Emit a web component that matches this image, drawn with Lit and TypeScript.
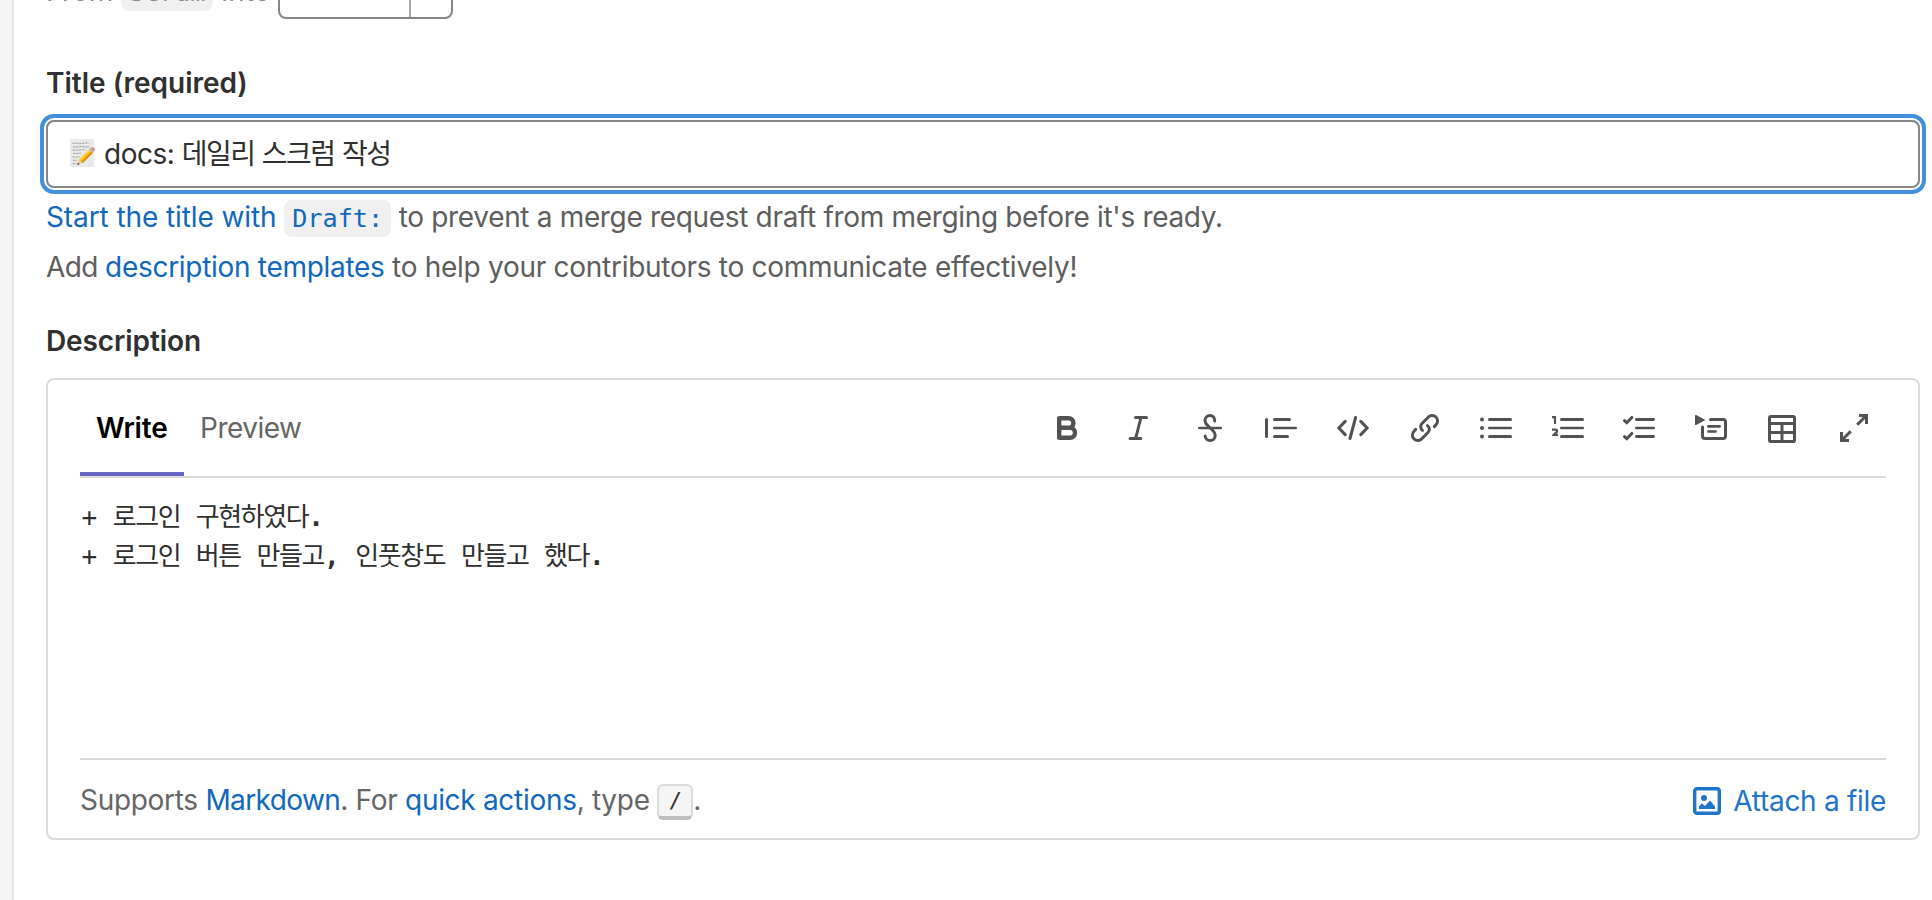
import { LitElement, html, svg, css } from "lit";
import { customElement } from "lit/decorators.js";

const icons = [
  // bold
  svg`<path stroke-width="4.4" stroke-linejoin="round" d="M9.2 6.2H18.6a4.6 4.6 0 0 1 0 9.6H9.2zM9.2 15.8H20a5 5 0 0 1 0 10H9.2z"/>`,
  // italic
  svg`<path d="M13.5 5.5H24.5M8 26.5H18.8M19 5.5L13.6 26.5"/>`,
  // strikethrough
  svg`<path d="M20.7 9C20.7 5.6 18.8 3.5 16 3.5C13 3.5 11 5.6 11 8.6C11 15 21.2 16.8 21.2 23.4C21.2 26.5 19 28.5 16.1 28.5C13.2 28.5 11.2 26.6 11.2 24"/><path stroke-width="2.6" d="M5.3 16H26.7"/>`,
  // quote
  svg`<path d="M1.5 7.5V24.5M9.5 7.5H24.5M9.5 24.5H22.5"/><path stroke-width="2.6" d="M9.3 16H30.7"/>`,
  // code
  svg`<path d="M8.2 9.4L1.9 16L8.2 22.6M23.8 9.4L30.1 16L23.8 22.6M18.6 5.5L13 26.5"/>`,
  // link
  svg`<path d="M25.3 14.6L26.8 13C29.2 10.5 29.1 7 26.9 5C24.8 2.9 21.4 2.9 19.2 5.2L13 11.5C11 13.6 11.3 16.8 13.5 18.4M6.7 17.4L5.2 19C2.8 21.5 2.9 25 5.1 27C7.2 29.1 10.6 29.1 12.8 26.8L19 20.5C21 18.4 20.7 15.2 18.5 13.6"/>`,
  // bullet list
  svg`<g fill="#525252" stroke="none"><circle cx="2" cy="7.5" r="2"/><circle cx="2" cy="16" r="2"/><circle cx="2" cy="24.5" r="2"/></g><path d="M9.5 7.5H30.5M9.5 24.5H30.5"/><path stroke-width="2.6" d="M9.3 16H30.7"/>`,
  // numbered list
  svg`<path stroke-width="2.2" stroke-linecap="butt" d="M0 5.1H3V12M0 17.6H3.2C5.6 17.6 5.6 20 3.6 21L1.6 22.9H6"/><path d="M9.5 7.5H30.5M9.5 24.5H30.5"/><path stroke-width="2.6" d="M9.3 16H30.7"/>`,
  // task list
  svg`<path stroke-width="2.9" d="M1.5 8.6L3.8 10.8L8.8 5.4M1.5 24.6L3.8 26.8L8.8 21.4M13.5 7.5H30.5M13.5 24.5H30.5"/><path stroke-width="2.6" d="M13.3 16H30.7"/>`,
  // collapsible section
  svg`<path fill="#525252" stroke="none" d="M0 3.6C0 3 .6 2.8 1.1 3.1L9.6 7.5C10.1 7.8 10.1 8.3 9.6 8.6L1.1 13C.6 13.3 0 13 0 12.5z"/><path d="M15.5 7.5H28Q30.5 7.5 30.5 10V24Q30.5 26.5 28 26.5H10Q7.5 26.5 7.5 24V15"/><path stroke-width="2.7" d="M13.4 14.4H24.6M13.4 19.5H20.6"/>`,
  // table
  svg`<rect x="3.5" y="4.5" width="25" height="25" rx="1.6"/><path stroke-linecap="butt" d="M3 11.6H29M3 20.4H29M16 12V30"/>`,
  // full screen
  svg`<path stroke-linecap="butt" d="M21 3.5H28.5V12M28 4L19.2 12.8M11 28.5H3.5V20M4 28L12.8 19.2"/>`,
];

@customElement("app-root")
export class AppRoot extends LitElement {
  static styles = css`
    :host {
      display: block;
      font: 400 28px/40px Inter, "Noto Sans CJK KR", sans-serif;
      letter-spacing: -0.3px;
      color: #303030;
    }
    * { box-sizing: border-box; }
    .page { display: flex; height: 900px; overflow: hidden; background: #fff; }
    .side { width: 14px; background: #f5f5f5; border-right: 2px solid #e6e6e6; }
    .main { flex: 1; min-width: 0; padding: 0 12px 0 32px; }
    .branches { height: 63px; overflow: hidden; }
    .branch-row { display: flex; height: 64px; margin-top: -45px; }
    .branch-text { width: 232px; padding-top: 16px; color: #8a8a8a; white-space: nowrap; letter-spacing: 0.1px; }
    .select { width: 175px; border: 2px solid #868686; border-radius: 8px; display: flex; justify-content: flex-end; }
    .caret { width: 42px; border-left: 2px solid #a8a8a8; }
    .code {
      font: 25.2px/0 "DejaVu Sans Mono", monospace;
      letter-spacing: 0;
      padding: 4px 8px;
      border-radius: 8px;
      background: #f0f0f0;
    }
    .label { font-weight: 600; letter-spacing: 0; }
    .desc { letter-spacing: -0.1px; }
    .input {
      display: flex;
      align-items: center;
      height: 68px;
      margin-top: 17px;
      padding: 0 22px;
      border: 2px solid #868686;
      border-radius: 8px;
      box-shadow: 0 0 0 2px #fff, 0 0 0 6px #428fdc;
    }
    .memo { width: 25px; height: 28px; margin-right: 9px; margin-bottom: 3px; }
    .title { white-space: pre; padding-bottom: 3px; letter-spacing: -0.5px; }
    .title-ko { font-family: "Noto Sans CJK KR", sans-serif; letter-spacing: -1.5px; word-spacing: 2.6px; }
    .help { margin: 0; color: #5e5e5e; white-space: nowrap; }
    .first { margin-top: 9px; }
    .second { margin-top: 10px; margin-bottom: 34px; }
    .link { color: #1068bf; }
    .even { letter-spacing: -0.1px; }
    .to { letter-spacing: -0.33px; }
    .add { letter-spacing: -0.6px; }
    .tail { letter-spacing: -0.28px; }
    .editor {
      height: 462px;
      margin-top: 17px;
      padding: 0 32px;
      border: 2px solid #dbdbdb;
      border-radius: 8px;
    }
    .bar { display: flex; height: 98px; border-bottom: 2px solid #dbdbdb; }
    .tab { height: 96px; padding: 28px 15px 0 16px; color: #666; letter-spacing: -0.5px; }
    .active { width: 104px; color: #000; font-weight: 600; letter-spacing: -0.2px; border-bottom: 4px solid #6666c4; }
    .tools {
      display: grid;
      grid-template-columns: 72px 72px 71px 72px 72px 71px 72px 71px 72px 71px 72px 32px;
      margin-left: auto;
      padding: 32px 16px 0 0;
    }
    .tool { display: block; width: 32px; height: 32px; fill: none; stroke: #525252; stroke-width: 3; stroke-linecap: round; }
    .text {
      height: 280px;
      padding: 20px 0 0 1.4px;
      font: 26px/39px "DejaVu Sans Mono", "Noto Sans CJK KR", monospace;
      letter-spacing: 0;
      white-space: pre;
    }
    .ko { letter-spacing: -1.43px; }
    .mark { font-weight: 700; }
    .foot { display: flex; justify-content: space-between; padding-top: 20px; border-top: 2px solid #dbdbdb; color: #666; }
    .md { letter-spacing: -0.6px; }
    .kbd {
      display: inline-flex;
      align-items: center;
      justify-content: center;
      width: 36px;
      height: 36px;
      vertical-align: 2px;
      border: 2px solid #dbdbdb;
      border-bottom: 4px solid #bfbfbf;
      border-radius: 6px;
      background: #f5f5f5;
      color: #303030;
      font: 22px/28px "DejaVu Sans Mono", monospace;
    }
    .attach { display: flex; color: #1f75cb; padding-top: 1px; }
    .image { width: 28px; height: 28px; margin: 6px 12px 0 0; }
  `;

  private mono(text: string) {
    return text.split(/([\uac00-\ud7a3]+|[.,])/).map((part, i) => {
      if (i % 2 === 0) return part;
      return html`<span class=${part === "." || part === "," ? "mark" : "ko"}>${part}</span>`;
    });
  }

  render() {
    return html`<div class="page">
      <div class="side"></div>
      <div class="main">
        <div class="branches">
          <div class="branch-row">
            <div class="branch-text">From <span class="code">Scrum</span> into</div>
            <div class="select"><div class="caret"></div></div>
          </div>
        </div>
        <div class="label">Title (required)</div>
        <div class="input">
          <svg class="memo" viewBox="0 0 25 28">
            <rect width="24" height="28" rx="1" fill="#e9e9e9" />
            <path d="M2.5 4.5l4-.5 3 .7 5-.8 4 .4M3 8h5l3-.5 5 .5h4M2.5 11.2h6l4-.5 3 .5M3 14.5h4l4-.4M2.5 18h5l2-.5M3 21.3h4M2.5 24.6h4" fill="none" stroke="#a0a0a0" stroke-width="1" stroke-dasharray="2.4 .7" />
            <path d="M7.2 25.9L9 20.5L12 23.8z" fill="#e9c58e" />
            <path d="M7.2 26L8 23.7L9.5 25.2z" fill="#333" />
            <path d="M9 20.3L19.2 10.4L22.8 13.8L12.6 23.9z" fill="#f5b70f" />
            <path d="M9 20.3L19.2 10.4L20.3 11.5L10.2 21.5z" fill="#ffd84a" />
            <path d="M11.6 23L21.8 12.9L22.8 13.8L12.6 23.9z" fill="#c98408" />
            <path d="M19.2 10.4L20.5 9.1L24 12.6L22.8 13.8z" fill="#a9b3bb" />
            <path d="M20.5 9.1C21.6 7.8 23 7.9 24.1 9.1C25.2 10.3 25.1 11.6 24 12.6z" fill="#ee7f88" />
          </svg>
          <span class="title">docs: <span class="title-ko">데일리 스크럼 작성</span></span>
        </div>
        <p class="help first"><span class="link even">Start the title with </span><span class="link code">Draft:</span><span class="to"> to prevent a merge request draft from merging before it's ready.</span></p>
        <p class="help second"><span class="add">Add </span><span class="link">description templates</span><span class="tail"> to help your contributors to communicate effectively!</span></p>
        <div class="label desc">Description</div>
        <div class="editor">
          <div class="bar">
            <div class="tab active">Write</div>
            <div class="tab">Preview</div>
            <div class="tools">${icons.map((i) => html`<svg class="tool" viewBox="0 0 32 32">${i}</svg>`)}</div>
          </div>
          <div class="text">${this.mono("+ 로그인 구현하였다.\n+ 로그인 버튼 만들고, 인풋창도 만들고 했다.")}</div>
          <div class="foot">
            <div>Supports <span class="link md">Markdown</span>. For <span class="link">quick actions</span>, type <span class="kbd">/</span>.</div>
            <div class="attach">
              <svg class="image" viewBox="0 0 28 28" fill="#1f75cb">
                <rect x="1.7" y="1.7" width="24.6" height="24.6" rx="2.4" fill="none" stroke="#1f75cb" stroke-width="3.4" />
                <circle cx="11" cy="11" r="3" />
                <path d="M6 22V19.5L8.7 16.2L12 19L17 13.6L22 19.5V22z" />
              </svg>
              Attach a file
            </div>
          </div>
        </div>
      </div>
    </div>`;
  }
}
